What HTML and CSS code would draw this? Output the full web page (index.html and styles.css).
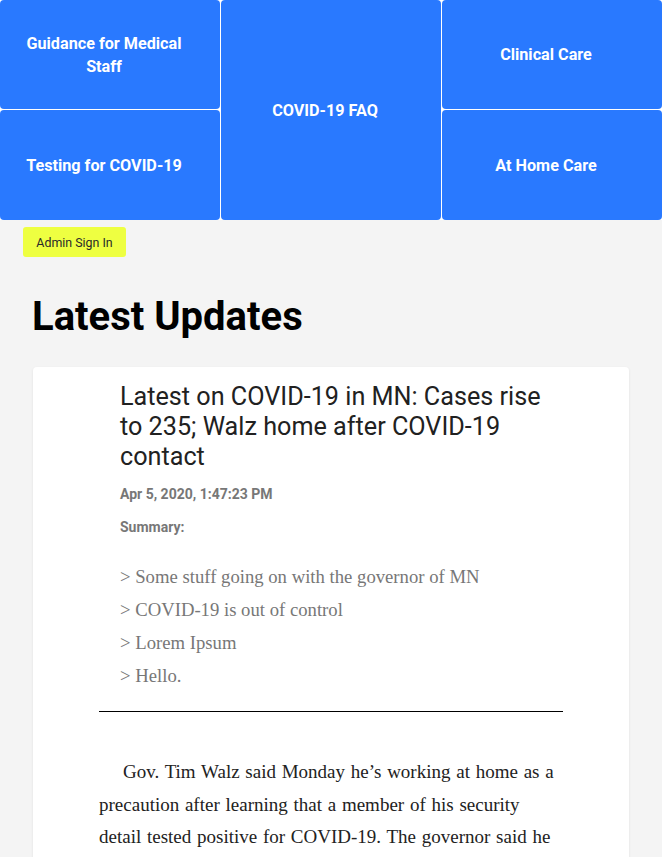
FILE: index.html
```html
<!DOCTYPE html>
<html lang="en">
<head>
<meta charset="utf-8">
<title>COVID-19 Updates</title>
<link rel="stylesheet" href="styles.css">
</head>
<body>
  <nav class="tiles">
    <a class="tile" href="#">Guidance for Medical Staff</a>
    <a class="tile tile-tall" href="#">COVID-19 FAQ</a>
    <a class="tile" href="#">Clinical Care</a>
    <a class="tile" href="#">Testing for COVID-19</a>
    <a class="tile" href="#">At Home Care</a>
  </nav>
  <div class="admin-row">
    <button class="admin-btn">Admin Sign In</button>
  </div>
  <main class="content">
    <h1 class="page-title">Latest Updates</h1>
    <article class="card">
      <div class="card-inner">
        <header class="post-head">
          <h2 class="post-title">Latest on COVID-19 in MN: Cases rise to 235; Walz home after COVID-19 contact</h2>
          <div class="post-date">Apr 5, 2020, 1:47:23 PM</div>
          <div class="post-summary-label">Summary:</div>
          <ul class="summary">
            <li>&gt; Some stuff going on with the governor of MN</li>
            <li>&gt; COVID-19 is out of control</li>
            <li>&gt; Lorem Ipsum</li>
            <li>&gt; Hello.</li>
          </ul>
        </header>
        <hr class="divider">
        <p class="post-body">Gov. Tim Walz said Monday he’s working at home as a precaution after learning that a member of his security detail tested positive for COVID-19. The governor said he has no symptoms and has not been tested, but will stay home for the remainder of the 14-day period.</p>
      </div>
    </article>
  </main>
</body>
</html>
```
FILE: styles.css
```css
* { box-sizing: border-box; }
html, body { margin: 0; padding: 0; }
body {
  background: #f4f4f4;
  font-family: Roboto, "Liberation Sans", sans-serif;
  color: #212121;
}
.tiles {
  display: grid;
  grid-template-columns: 220px 220px 220px;
  grid-template-rows: 109px 110px;
  column-gap: 1px;
  row-gap: 1px;
  background: #ffffff;
  height: 220px;
}
.tile {
  display: flex;
  align-items: center;
  justify-content: center;
  text-align: center;
  padding: 0 32px 0 20px;
  background: #2979ff;
  color: #ffffff;
  font-weight: 700;
  font-size: 16.2px;
  line-height: 23px;
  text-decoration: none;
  border-radius: 4px;
}
.tile-tall { grid-row: 1 / span 2; grid-column: 2; }
.admin-row { padding: 7px 0 0 23px; }
.admin-btn {
  display: block;
  width: 103px;
  height: 30px;
  border: none;
  border-radius: 3px;
  background: #eeff41;
  color: #2a2a2a;
  font-family: Roboto, "Liberation Sans", sans-serif;
  font-size: 12.4px;
  padding: 0;
  cursor: pointer;
}
.content { padding: 0 33px; }
.page-title {
  margin: 36px 0 27px -1px;
  font-size: 40px;
  line-height: 47px;
  font-weight: 700;
  color: #000;
}
.card {
  background: #fff;
  border-radius: 4px;
  box-shadow: 0 1px 3px rgba(0,0,0,0.08);
  padding: 15px 0 40px;
}
.card-inner { width: 464px; margin: 0 auto; }
.post-head { padding: 0 21px; }
.post-title {
  margin: 0;
  font-size: 25.2px;
  line-height: 30px;
  font-weight: 400;
  color: #212121;
}
.post-date {
  margin-top: 14px;
  font-size: 14px;
  font-weight: 700;
  color: #777;
}
.post-summary-label {
  margin-top: 17px;
  font-size: 14px;
  font-weight: 700;
  color: #777;
}
.summary {
  list-style: none;
  margin: 25px 0 0;
  padding: 0;
  font-family: "Liberation Serif", serif;
  font-size: 18.7px;
  line-height: 33px;
  color: #777;
}
.divider {
  margin: 19px 0 0;
  border: none;
  border-top: 1px solid #000;
  height: 0;
}
.post-body {
  margin: 44px 0 0;
  font-family: "Liberation Serif", serif;
  font-size: 19px;
  word-spacing: 1px;
  line-height: 32.6px;
  text-indent: 24px;
  color: #222;
}
```
